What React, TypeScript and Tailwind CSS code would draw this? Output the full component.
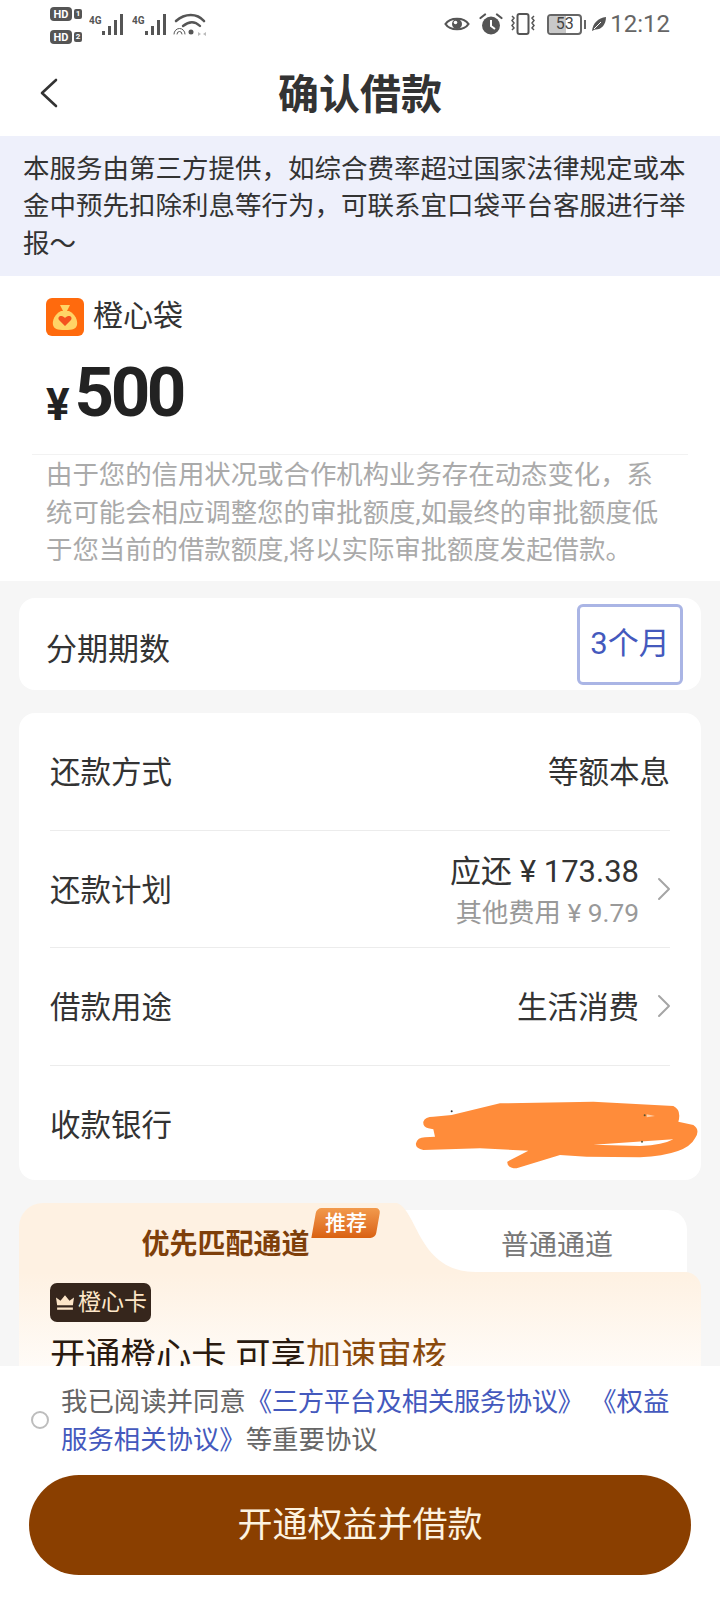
import React from 'react';

const HdBadge = ({ n }: { n: string }) => (
  <div className="flex items-center gap-[2px]">
    <span className="flex h-[14px] w-[22px] items-center justify-center rounded-[4px] bg-[#555] text-[11px] font-bold leading-none text-white">HD</span>
    <span className="flex h-[10px] w-[8px] items-center justify-center rounded-[2px] bg-[#555] text-[8px] font-bold leading-none text-white">{n}</span>
  </div>
);

const Signal = () => (
  <svg width="38" height="24" viewBox="0 0 38 24" className="text-[#555]">
    <text x="0" y="11" fontSize="10" fontWeight="700" fill="currentColor" fontFamily="Roboto, sans-serif">4G</text>
    <rect x="13" y="18" width="3" height="4" fill="currentColor" />
    <rect x="19" y="13" width="3" height="9" fill="currentColor" />
    <rect x="25" y="7" width="3" height="15" fill="currentColor" />
    <rect x="31" y="1" width="3" height="21" fill="currentColor" />
  </svg>
);

const StatusBar = () => (
  <div className="flex h-[50px] items-start justify-between pl-[50px] pr-[50px] pt-[7px] text-[#555]">
    <div className="flex gap-[7px]">
      <div className="flex flex-col gap-[9px]">
        <HdBadge n="1" />
        <HdBadge n="2" />
      </div>
      <div className="flex gap-[5px] pt-[6px]">
        <Signal />
        <Signal />
        <svg width="34" height="24" viewBox="0 0 34 24" fill="none" stroke="#555" strokeLinecap="round" className="ml-[-2px]">
          <path d="M3 8C12 0 24 0 31 8" strokeWidth="2.6" />
          <path d="M10 13C16 8 22 8 27 13" strokeWidth="2.4" />
          <circle cx="18" cy="19" r="2.5" fill="#555" stroke="none" />
          <path d="M1 21a5.5 5.5 0 0 1 11 0M4 21a2.5 2.5 0 0 1 5 0" strokeWidth="1" />
          <path d="M25 19l3 2-3 2zM33 19l-3 2 3 2z" fill="#bbb" stroke="none" />
        </svg>
      </div>
    </div>
    <div className="flex items-center pt-[5px]">
      <svg width="26" height="20" viewBox="0 0 26 20" fill="none">
        <path d="M1.5 10C6 3 20 3 24.500 10C20 17 6 17 1.500 10Z" stroke="#555" strokeWidth="2.2" />
        <circle cx="13" cy="10" r="5" fill="#555" />
        <circle cx="11.500" cy="8.500" r="1.800" fill="#fff" />
      </svg>
      <svg width="24" height="22" viewBox="0 0 24 22" className="ml-[9px]">
        <circle cx="12" cy="12.500" r="9" fill="#555" />
        <path d="M12 7v6l4 3" stroke="#fff" strokeWidth="2" fill="none" />
        <path d="M1.500 5L6 1.500M22.500 5L18 1.500" stroke="#555" strokeWidth="2.2" strokeLinecap="round" />
      </svg>
      <svg width="28" height="22" viewBox="0 0 28 22" fill="none" stroke="#555" className="ml-[6px]">
        <rect x="8.500" y="1" width="11" height="20" rx="2" strokeWidth="2" />
        <path d="M3 3l2 2-2 2.500 2 2.500-2 2.500 2 2.500-2 2M25 3l-2 2 2 2.500-2 2.500 2 2.500-2 2.500 2 2" strokeWidth="1.500" />
      </svg>
      <div className="ml-[10px] flex items-center gap-[2px]">
        <div className="relative flex h-[21px] w-[35px] items-center justify-center overflow-hidden rounded-[4px] border-2 border-[#666]">
          <div className="absolute bottom-0 left-0 top-0 w-[53%] bg-[#c8c8c8]" />
          <span className="relative font-['Roboto',sans-serif] text-[16px] leading-none text-[#444]">53</span>
        </div>
        <div className="h-[9px] w-[2px] bg-[#666]" />
      </div>
      <svg width="16" height="16" viewBox="0 0 16 16" className="ml-[5px]">
        <path d="M1 15C2 7 7 2 15 1C15 9 10 14 4 13.500L1 15Z" fill="#555" />
        <path d="M3 13L10 6" stroke="#fff" strokeWidth="1" />
      </svg>
      <span className="ml-[3px] font-['Roboto',sans-serif] text-[24px] leading-none text-[#666]">12:12</span>
    </div>
  </div>
);

const Chevron = () => (
  <svg width="14" height="24" viewBox="0 0 14 24" fill="none" stroke="#a5a5a5" strokeWidth="2" strokeLinecap="round" strokeLinejoin="round" className="mr-[-1px]">
    <path d="M2 2l10 10L2 22" />
  </svg>
);

const Row = ({ label, children, last }: { label: string; children?: React.ReactNode; last?: boolean }) => (
  <div className={`flex h-[117.5px] items-center justify-between ${last ? '' : 'border-b border-[#ececec]'}`}>
    <span className="pt-[4px] text-[30.5px] leading-none text-[#333]">{label}</span>
    {children}
  </div>
);

const Scribble = () => (
  <svg width="340" height="120" viewBox="0 0 1020 360" className="absolute left-[361px] top-[367px]">
    <path
      d="M130 125Q135 110 160 110L215 105L360 70L640 65L880 78Q905 90 895 125L940 135Q962 150 945 175Q920 225 780 232L620 230L540 225L410 265Q380 265 382 245L445 212L300 205L130 210Q105 205 108 190Q112 172 135 172L165 170L160 148L145 145Q128 140 130 125Z"
      fill="#ff8c3a"
    />
    <path d="M640 194L880 178Q850 195 780 198Z" fill="#fff" />
    <path d="M800 103L825 108L800 112Z" fill="#ffd0a8" />
    <circle cx="215" cy="94" r="3" fill="#333" />
    <circle cx="794" cy="106" r="3" fill="#553" />
    <circle cx="786" cy="185" r="3" fill="#553" />
  </svg>
);

const App = () => {
  return (
    <div className="flex h-[1600px] w-[720px] flex-col overflow-hidden bg-[#f6f6f6] font-['Roboto','Noto_Sans_CJK_SC',sans-serif]">
      <div className="min-h-0 flex-1 overflow-hidden">
        {/* Top bar */}
        <div className="bg-white">
          <StatusBar />
          <div className="relative flex h-[86px] items-center justify-center pt-[4px]">
            <svg width="18" height="30" viewBox="0 0 18 30" fill="none" stroke="#333" strokeWidth="2.6" strokeLinecap="round" strokeLinejoin="round" className="absolute left-[40px] top-[28px]">
              <path d="M16 2L2 15l14 13" />
            </svg>
            <h1 className="text-[41px] font-bold leading-none text-[#333]">确认借款</h1>
          </div>
        </div>

        {/* Notice */}
        <div className="flex h-[140px] items-center bg-[#eef0fb] pl-[23px] pr-[20px] text-[26.5px] leading-[37.5px] text-[#333]">
          <p>本服务由第三方提供，如综合费率超过国家法律规定或本金中预先扣除利息等行为，可联系宜口袋平台客服进行举报～</p>
        </div>

        {/* Amount */}
        <div className="h-[305px] bg-white px-[32px]">
          <div className="flex items-center gap-[9px] px-[14px] pt-[22px]">
            <div className="flex h-[38px] w-[38px] items-center justify-center rounded-[6px] bg-[#ff6a0d]">
              <svg width="26" height="28" viewBox="0 0 26 28">
                <path d="M8 2h10l-3 6h-4z" fill="#ffd466" />
                <path d="M9 8h8c6 3 9 9 8 14-1 4-4 5-12 5S2 26 1 22C0 17 3 11 9 8z" fill="#ffd466" />
                <path d="M13 23l-6-6c-2-3 2-6 6-2 4-4 8-1 6 2z" fill="#f4511e" />
              </svg>
            </div>
            <span className="mt-[-2px] text-[30px] leading-none text-[#333]">橙心袋</span>
          </div>
          <div className="flex h-[119px] items-start gap-[5px] border-b border-[#f2f2f2] px-[14px]">
            <span className="pt-[42px] text-[44px] font-bold leading-[54px] text-[#222]">¥</span>
            <span className="pt-[17px] text-[69px] font-bold leading-[80px] tracking-[-3.5px] text-[#222]">500</span>
          </div>
          <p className="w-[640px] pl-[14px] pt-[2px] text-[26.4px] leading-[37.5px] text-[#aaa]">
            由于您的信用状况或合作机构业务存在动态变化，系统可能会相应调整您的审批额度,如最终的审批额度低于您当前的借款额度,将以实际审批额度发起借款。
          </p>
        </div>

        {/* Installments */}
        <div className="mx-[19px] mt-[17px] flex h-[92px] items-center justify-between rounded-[16px] bg-white pl-[27px] pr-[18px]">
          <span className="pt-[11px] text-[31px] leading-none text-[#333]">分期期数</span>
          <div className="flex h-[81px] w-[106px] items-center justify-center rounded-[6px] border-[3px] border-[#aab5e5] text-[31px] text-[#4459bd]">3个月</div>
        </div>

        {/* Repayment details */}
        <div className="relative mx-[19px] mt-[23px] h-[467px] rounded-[16px] bg-white pl-[31px] pr-[31px]">
          <Row label="还款方式">
            <span className="pt-[4px] text-[30.5px] leading-none text-[#333]">等额本息</span>
          </Row>
          <Row label="还款计划">
            <div className="flex items-center gap-[18px]">
              <div className="flex flex-col items-end gap-[13px] pt-[5px]">
                <span className="text-[31px] leading-none text-[#333]">应还 ¥ 173.38</span>
                <span className="text-[26.3px] leading-none text-[#999]">其他费用 ¥ 9.79</span>
              </div>
              <Chevron />
            </div>
          </Row>
          <Row label="借款用途">
            <div className="flex items-center gap-[18px]">
              <span className="pt-[4px] text-[30.5px] leading-none text-[#333]">生活消费</span>
              <Chevron />
            </div>
          </Row>
          <Row label="收款银行" last />
          <Scribble />
        </div>

        {/* Channel tabs */}
        <div className="mx-[19px] mt-[23px]">
          <div className="relative flex h-[69px] pr-[14px]">
            <div className="flex w-[377px] items-center justify-center rounded-tl-[24px] bg-[#fef1e2] pt-[15px] text-[28px] font-bold leading-none text-[#7e3f0a]">
              <span className="ml-[36px]">优先匹配通道</span>
            </div>
            <div className="relative flex flex-1 items-center justify-center pt-[17px] text-[28px] leading-none text-[#777]">
              <div className="absolute inset-0 top-[7px] rounded-tr-[20px] bg-white" />
              <svg width="80" height="69" viewBox="0 0 80 69" preserveAspectRatio="none" className="absolute left-0 top-0">
                <path d="M0 0H1C22 8 22 69 80 69H0Z" fill="#fef1e2" />
              </svg>
              <span className="relative ml-[31px]">普通通道</span>
            </div>
            <div className="absolute left-[295px] top-[5px] flex h-[30px] w-[64px] -skew-x-[10deg] items-center justify-center rounded-[5px] rounded-bl-[0px] bg-gradient-to-b from-[#f29a4c] to-[#d9610f] text-[21px] font-medium leading-none text-white">
              <span className="skew-x-[10deg]">推荐</span>
            </div>
          </div>
          <div className="h-[130px] rounded-tr-[16px] bg-gradient-to-b from-[#fef1e2] to-white px-[31px] pt-[11px]">
            <div className="flex h-[39px] w-[101px] items-center justify-center gap-[2px] rounded-[7px] bg-[#36261c] text-[23px] leading-none text-[#fde6c8]">
              <svg width="22" height="18" viewBox="0 0 18 16" fill="#fde6c8">
                <path d="M2 10L1 3l4 3 4-5 4 5 4-3-1 7z" />
                <rect x="2" y="12" width="14" height="2" />
              </svg>
              橙心卡
            </div>
            <p className="pt-[14px] text-[35.3px] leading-[40px] text-[#2a1a0f]">
              开通橙心卡 可享<span className="text-[#8a4a0c]">加速审核</span>
            </p>
          </div>
        </div>
      </div>

      {/* Agreement and submit */}
      <div className="flex h-[234px] flex-col bg-white px-[29px]">
        <div className="flex items-start gap-[12px] pt-[17px]">
          <div className="ml-[2px] mt-[28px] h-[18px] w-[18px] shrink-0 rounded-full border-2 border-[#bdbdbd]" />
          <p className="text-[26.4px] leading-[38px] text-[#666]">
            我已阅读并同意<span className="tracking-[-0.4px] text-[#4459bd]">《三方平台及相关服务协议》</span> <span className="text-[#4459bd]">《权益服务相关协议》</span>等重要协议
          </p>
        </div>
        <button className="mt-[16px] flex h-[100px] w-[662px] items-center justify-center rounded-full bg-[#8a3f00] text-[35px] leading-none text-[#fdf3e0]">
          开通权益并借款
        </button>
      </div>
    </div>
  );
};

export default App;
